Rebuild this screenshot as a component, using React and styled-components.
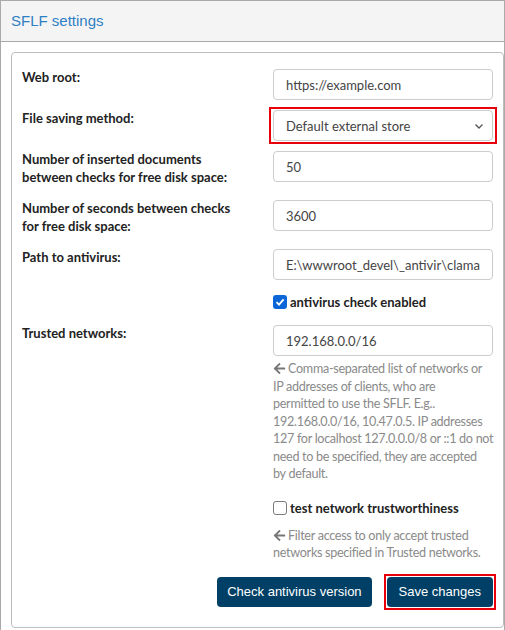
import styled, { createGlobalStyle } from 'styled-components';
import { FaArrowLeft } from 'react-icons/fa';

const GlobalStyle = createGlobalStyle`
  body {
    margin: 0;
    background: #ffffff;
    font-family: Lato, "Liberation Sans", sans-serif;
  }
`;

const trustedHelp = [
  'Comma-separated list of networks or',
  'IP addresses of clients, who are',
  'permitted to use the SFLF. E.g..',
  '192.168.0.0/16, 10.47.0.5. IP addresses',
  '127 for localhost 127.0.0.0/8 or ::1 do not',
  'need to be specified, they are accepted',
  'by default.',
];

const filterHelp = ['Filter access to only accept trusted', 'networks specified in Trusted networks.'];

const HelpText = ({ lines }) => (
  <Help>
    {lines.map((line, i) => (
      <HelpLine key={i}>
        {i === 0 && <FaArrowLeft />}
        {line}
      </HelpLine>
    ))}
  </Help>
);

const App = () => {
  return (
    <>
      <GlobalStyle />
      <Panel>
        <PanelHeader>SFLF settings</PanelHeader>
        <PanelBody>
          <Card>
            <Row>
              <Label>Web root:</Label>
              <Field>
                <Input defaultValue="https://example.com" />
              </Field>
            </Row>
            <Row>
              <Label>File saving method:</Label>
              <Field>
                <Highlight $wide>
                  <Select>
                    <span>Default external store</span>
                    <svg width="12" height="12" viewBox="0 0 12 12">
                      <polyline points="2.5,4.5 6,8 9.5,4.5" fill="none" stroke="#555" strokeWidth="1.3" />
                    </svg>
                  </Select>
                </Highlight>
              </Field>
            </Row>
            <Row>
              <Label>Number of inserted documents between checks for free disk space:</Label>
              <Field>
                <Input defaultValue="50" />
              </Field>
            </Row>
            <Row>
              <Label>Number of seconds between checks for free disk space:</Label>
              <Field>
                <Input defaultValue="3600" />
              </Field>
            </Row>
            <Row>
              <Label>Path to antivirus:</Label>
              <Field>
                <Input defaultValue="E:\wwwroot_devel\_antivir\clamav_1.0.1\clamscan.exe" />
              </Field>
            </Row>
            <Row>
              <Label />
              <Field>
                <Check>
                  <Box $checked>
                    <svg width="10" height="10" viewBox="0 0 10 10">
                      <polyline points="1.5,5.2 4,7.6 8.6,2.4" fill="none" stroke="#fff" strokeWidth="1.8" />
                    </svg>
                  </Box>
                  antivirus check enabled
                </Check>
              </Field>
            </Row>
            <Row>
              <Label>Trusted networks:</Label>
              <Field>
                <Input defaultValue="192.168.0.0/16" />
                <HelpText lines={trustedHelp} />
              </Field>
            </Row>
            <Row>
              <Label />
              <Field>
                <Check $spaced>
                  <Box />
                  test network trustworthiness
                </Check>
                <HelpText lines={filterHelp} />
              </Field>
            </Row>
            <Actions>
              <Button $narrow>Check antivirus version</Button>
              <Highlight>
                <Button>Save changes</Button>
              </Highlight>
            </Actions>
          </Card>
        </PanelBody>
      </Panel>
    </>
  );
};

export default App;

const Panel = styled.div`
  width: 505px;
  height: 630px;
  box-sizing: border-box;
  border: 1px solid #aaaaaa;
  border-bottom: none;
  overflow: hidden;
`;

const PanelHeader = styled.div`
  height: 40px;
  line-height: 40px;
  padding-left: 10px;
  background: #f4f4f4;
  border-bottom: 1px solid #aaaaaa;
  color: #2f80c3;
  font-family: "Liberation Sans", Arial, sans-serif;
  font-size: 15px;
`;

const PanelBody = styled.div`
  padding: 10px 0 0 10px;
`;

const Card = styled.div`
  border: 1px solid #bdbdbd;
  border-radius: 4px;
  padding: 16px 10px 20px 10px;
`;

const Row = styled.div`
  display: flex;
  align-items: flex-start;
  justify-content: space-between;
  margin-bottom: 10px;
`;

const Label = styled.div`
  width: 212px;
  font-size: 13px;
  font-weight: 700;
  line-height: 18px;
  color: #222222;
  margin-top: -1px;
  margin-bottom: 4px;
`;

const Field = styled.div`
  width: 220px;
`;

const Highlight = styled.div`
  display: ${(p) => (p.$wide ? 'block' : 'inline-flex')};
  border: 2px solid #e8000b;
  padding: ${(p) => (p.$wide ? '1px 2px' : '1px')};
  margin: ${(p) => (p.$wide ? '-3px -4px' : '-3px')};
`;

const Input = styled.input`
  display: block;
  width: 100%;
  height: 31px;
  box-sizing: border-box;
  border: 1px solid #cccccc;
  border-radius: 4px;
  padding: 0 12px;
  font-family: Lato, "Liberation Sans", sans-serif;
  font-size: 13px;
  color: #444444;
  outline: none;
`;

const Select = styled.div`
  display: flex;
  align-items: center;
  justify-content: space-between;
  height: 31px;
  box-sizing: border-box;
  border: 1px solid #cccccc;
  border-radius: 4px;
  padding: 0 7px 0 12px;
  font-size: 13px;
  color: #444444;
`;

const Check = styled.label`
  display: flex;
  align-items: center;
  gap: 3px;
  font-size: 13px;
  font-weight: 700;
  color: #222222;
  line-height: 18px;
  margin: ${(p) => (p.$spaced ? '6px 0 10px' : '3px 0 4px')};
`;

const Box = styled.span`
  display: inline-flex;
  align-items: center;
  justify-content: center;
  width: 14px;
  height: 14px;
  box-sizing: border-box;
  border-radius: 3px;
  background: ${(p) => (p.$checked ? '#0b66d8' : '#ffffff')};
  border: ${(p) => (p.$checked ? 'none' : '1.5px solid #7a7a7a')};
`;

const Help = styled.div`
  margin-top: 4px;
  font-size: 12.6px;
  line-height: 17.5px;
  letter-spacing: -0.3px;
  color: #8a8a8a;

  svg {
    font-size: 13px;
    color: #777777;
    vertical-align: -2px;
    margin-right: 2px;
  }
`;

const HelpLine = styled.div`
  white-space: nowrap;
`;

const Actions = styled.div`
  display: flex;
  justify-content: flex-end;
  align-items: center;
  gap: 15px;
  margin-top: 15px;
`;

const Button = styled.button`
  height: 30px;
  padding: 0 ${(p) => (p.$narrow ? '10px' : '12px')};
  border: none;
  border-radius: 4px;
  background: #003f66;
  color: #ffffff;
  font-family: "Liberation Sans", Arial, sans-serif;
  font-size: 13px;
  cursor: pointer;
`;
